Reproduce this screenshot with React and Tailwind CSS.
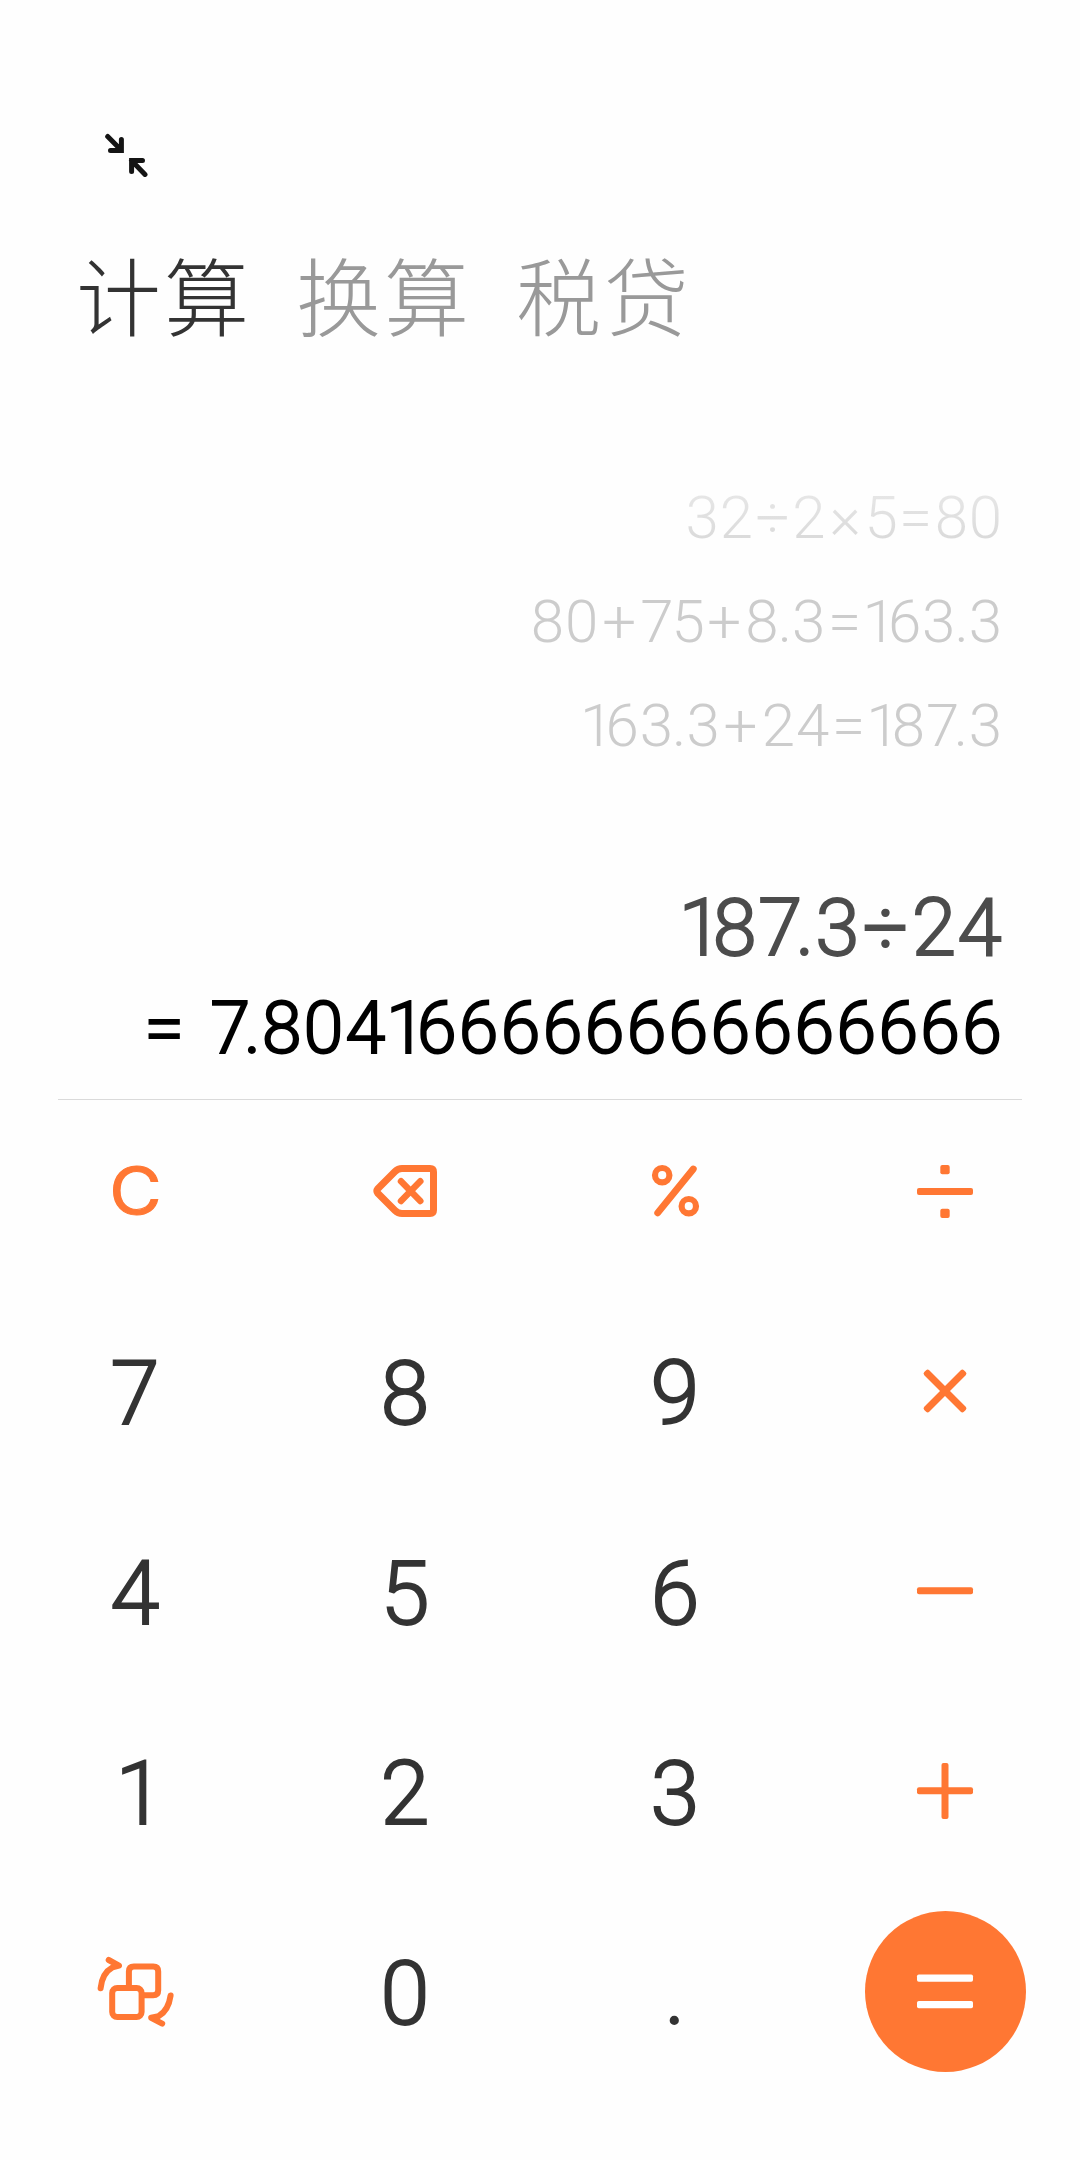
const ORANGE = '#ff7733'

function CollapseIcon() {
  return (
    <svg className="h-11 w-11" viewBox="104 133 44 44" fill="none" stroke="#141414" strokeWidth="5" strokeLinecap="round">
      <path d="M107.7 136.5 L121.3 150.3 M121.4 139.5 V150.4 H110.5" />
      <path d="M145 174.5 L131.5 160.6 M142.5 160.6 H131.6 V171.5" />
    </svg>
  )
}

function BackspaceIcon() {
  return (
    <svg className="h-20 w-20" viewBox="365 1151 80 80" fill="none" stroke={ORANGE} strokeWidth="7" strokeLinecap="round" strokeLinejoin="round">
      <path d="M402 1168.5 H430 Q433.5 1168.5 433.5 1172 V1210 Q433.5 1213.5 430 1213.5 H402 Q398 1213.5 395 1210.5 L377.8 1193.3 Q376 1191 377.8 1188.7 L395 1171.5 Q398 1168.5 402 1168.5 Z" />
      <path strokeWidth="6.5" d="M401 1181.3 L420.3 1201 M420.3 1181.3 L401 1201" />
    </svg>
  )
}

function PercentIcon() {
  return (
    <svg className="h-20 w-20" viewBox="635 1151 80 80" fill="none" stroke={ORANGE}>
      <circle cx="662.2" cy="1175.2" r="7.2" strokeWidth="6.2" />
      <circle cx="688.8" cy="1206.2" r="7.2" strokeWidth="6.2" />
      <path strokeWidth="6.8" strokeLinecap="round" d="M693.3 1169 L657.7 1212.8" />
    </svg>
  )
}

function DivideIcon() {
  return (
    <svg className="h-20 w-20" viewBox="-40 -40 80 80" fill={ORANGE}>
      <rect x="-4.7" y="-26" width="9.4" height="9.2" rx="2" />
      <rect x="-28" y="-3" width="56" height="7" rx="2" />
      <rect x="-4.7" y="17.8" width="9.4" height="9.2" rx="2" />
    </svg>
  )
}

function TimesIcon() {
  return (
    <svg className="h-20 w-20" viewBox="-40 -40 80 80" fill={ORANGE}>
      <rect x="-28" y="-3.5" width="56" height="7" rx="2.2" transform="rotate(45)" />
      <rect x="-28" y="-3.5" width="56" height="7" rx="2.2" transform="rotate(-45)" />
    </svg>
  )
}

function MinusIcon() {
  return (
    <svg className="h-20 w-20" viewBox="-40 -40 80 80" fill={ORANGE}>
      <rect x="-28" y="-3.7" width="56" height="7" rx="2" />
    </svg>
  )
}

function PlusIcon() {
  return (
    <svg className="h-20 w-20" viewBox="-40 -40 80 80" fill={ORANGE}>
      <rect x="-28" y="-3.7" width="56" height="7" rx="2" />
      <rect x="-3.5" y="-28" width="7" height="56" rx="2" />
    </svg>
  )
}

function EqualsIcon() {
  return (
    <svg className="h-20 w-20" viewBox="-40 -40 80 80" fill="#ffffff">
      <rect x="-28" y="-16.5" width="56" height="7.3" rx="1.8" />
      <rect x="-28" y="10" width="56" height="7.3" rx="1.8" />
    </svg>
  )
}

function SwitchIcon() {
  return (
    <svg className="h-20 w-20" viewBox="95 1951 80 80" fill="none" stroke={ORANGE} strokeWidth="6" strokeLinecap="round" strokeLinejoin="round">
      <rect x="112.2" y="1988" width="29.4" height="29" rx="5" />
      <path strokeLinecap="butt" d="M128.9 1988 V1971.5 Q128.9 1966.5 133.9 1966.5 H153.2 Q158.2 1966.5 158.2 1971.5 V1990.2 Q158.2 1995.2 153.2 1995.2 H142" />
      <path d="M100.6 1988.3 Q102 1973 112.5 1967.3 L119 1965.6 L108.7 1960" />
      <path d="M170.6 1995.5 Q168.5 2010.5 158.6 2016.2 L151.2 2017.8 L162.2 2023.6" />
    </svg>
  )
}

// Spacing corrections, in em, for the glyphs that are set tighter or wider than the digits.
const spacing = {
  1: '-ml-[0.02em] tracking-[-0.13em]',
  7: 'tracking-[-0.035em]',
  '7.': 'mr-[0.1em] tracking-[-0.09em]',
  5: 'tracking-[-0.01em]',
  '.': '-ml-[0.03em] tracking-[0em]',
  '+': 'ml-[0.05em] tracking-[0.07em]',
  '=': 'ml-[0.03em] tracking-[0.04em]',
  '= ': 'tracking-[0.06em]',
  '÷': 'ml-[0.025em] tracking-[0.045em]',
  '×': 'ml-[0.05em] tracking-[0.06em]',
}

function Expression({ text }) {
  return text.split(/(= |7\.|[157.+=÷×])/).map((part, i) =>
    spacing[part] ? <span key={i} className={spacing[part]}>{part}</span> : part
  )
}

function Digit({ children, className = '' }) {
  return (
    <span className={`mt-[5px] text-[89px] leading-none font-light text-[#333333] [-webkit-text-stroke:1.8px_#333333] ${className}`}>
      {children}
    </span>
  )
}

const keys = [
  <span className="inline-block scale-x-[1.12] font-[Inter] text-[64px] leading-none text-[#ff7733] [-webkit-text-stroke:1px_#ff7733]">C</span>,
  <BackspaceIcon />,
  <PercentIcon />,
  <DivideIcon />,
  <Digit>7</Digit>,
  <Digit>8</Digit>,
  <Digit>9</Digit>,
  <TimesIcon />,
  <Digit>4</Digit>,
  <Digit>5</Digit>,
  <Digit>6</Digit>,
  <MinusIcon />,
  <Digit className="pl-2.5">1</Digit>,
  <Digit>2</Digit>,
  <Digit>3</Digit>,
  <PlusIcon />,
  <SwitchIcon />,
  <Digit>0</Digit>,
  <Digit>.</Digit>,
  <span className="flex h-[161px] w-[161px] items-center justify-center rounded-full bg-[#ff7733]"><EqualsIcon /></span>,
]

export default function App() {
  return (
    <div className="flex h-[2160px] w-[1080px] flex-col overflow-hidden bg-[#fefefe] font-[Roboto,sans-serif]">
      <header className="pt-[133px] pl-[104px]">
        <CollapseIcon />
      </header>
      <nav className="mt-[61px] flex gap-11 pl-[76px] font-['Noto_Sans_CJK_SC',sans-serif] text-[85px] leading-[110px] font-light tracking-[3px] text-[#999999]">
        <span className="text-[#333333]">计算</span>
        <span>换算</span>
        <span>税贷</span>
      </nav>
      <section className="mt-[118px] flex flex-col items-end pr-[77px] text-[60px] leading-[104px] font-light tracking-[0.015em] text-[#cccccc]">
        <p className="bg-linear-to-b from-[#eeeeee] to-[#d2d2d2] bg-clip-text text-transparent"><Expression text="32÷2×5=80" /></p>
        <p><Expression text="80+75+8.3=163.3" /></p>
        <p><Expression text="163.3+24=187.3" /></p>
      </section>
      <section className="mt-[98px] flex flex-col items-end">
        <p className="pr-[77px] text-[80px] leading-[104px] font-light tracking-[0.015em] text-[#4c4c4c] [-webkit-text-stroke:1.8px_#4c4c4c]"><Expression text="187.3÷24" /></p>
        <p className="mt-px pr-[76px] text-[72px] leading-[96px] font-light tracking-[0.028em] text-black [-webkit-text-stroke:2px_#000000]"><Expression text="= 7.804166666666666666" /></p>
      </section>
      <hr className="mx-[58px] mt-[22px] border-[#dadada]" />
      <main className="-mt-[9px] grid auto-rows-[200px] grid-cols-4">
        {keys.map((key, i) => (
          <button key={i} className="flex items-center justify-center">{key}</button>
        ))}
      </main>
    </div>
  )
}
